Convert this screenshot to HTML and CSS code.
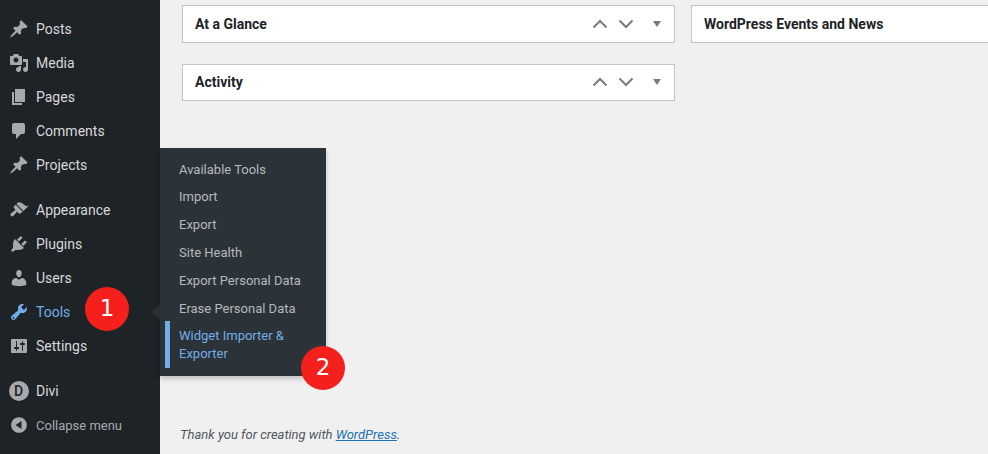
FILE: index.html
```
<!DOCTYPE html>
<html lang="en">
<head>
<meta charset="utf-8">
<title>Dashboard</title>
<link rel="stylesheet" href="styles.css">
</head>
<body>
<div class="app">
  <nav class="sidebar">
    <ul class="menu">
      <li class="item"><svg class="icon" viewBox="0 0 20 20"><path d="M10.44 3.02l1.82-1.82 6.36 6.35-1.83 1.82c-1.05-.68-2.48-.57-3.41.36l-.75.75c-.92.93-1.04 2.35-.35 3.41l-1.83 1.82-2.41-2.41-2.8 2.79c-.42.42-3.38 2.71-3.8 2.29s1.86-3.39 2.28-3.81l2.79-2.79L4.1 9.36l1.83-1.82c1.05.69 2.48.57 3.4-.36l.75-.75c.93-.92 1.05-2.35.36-3.41z"/></svg>Posts</li>
      <li class="item"><svg class="icon" viewBox="0 0 20 20"><path d="M13 11V4c0-.55-.45-1-1-1h-1.67L9 1H5L3.67 3H2c-.55 0-1 .45-1 1v7c0 .55.45 1 1 1h10c.55 0 1-.45 1-1zM7 4.5c1.38 0 2.5 1.12 2.5 2.5S8.38 9.5 7 9.5 4.5 8.38 4.5 7 5.62 4.5 7 4.5zM14 6h5v10.5c0 1.38-1.12 2.5-2.5 2.5S14 17.88 14 16.5s1.12-2.5 2.5-2.5c.17 0 .34.02.5.05V9h-3V6zm-4 8.05V13h2v3.5c0 1.38-1.12 2.5-2.5 2.5S7 17.88 7 16.5 8.12 14 9.5 14c.17 0 .34.02.5.05z"/></svg>Media</li>
      <li class="item"><svg class="icon" viewBox="0 0 20 20"><path d="M6 15V2h10v13H6zm-1 1h8v2H3V5h2v11z"/></svg>Pages</li>
      <li class="item"><svg class="icon" viewBox="0 0 20 20"><path d="M5 2h9c1.1 0 2 .9 2 2v7c0 1.1-.9 2-2 2h-2l-5 5v-5H5c-1.1 0-2-.9-2-2V4c0-1.1.9-2 2-2z"/></svg>Comments</li>
      <li class="item"><svg class="icon" viewBox="0 0 20 20"><path d="M10.44 3.02l1.82-1.82 6.36 6.35-1.83 1.82c-1.05-.68-2.48-.57-3.41.36l-.75.75c-.92.93-1.04 2.35-.35 3.41l-1.83 1.82-2.41-2.41-2.8 2.79c-.42.42-3.38 2.71-3.8 2.29s1.86-3.39 2.28-3.81l2.79-2.79L4.1 9.36l1.83-1.82c1.05.69 2.48.57 3.4-.36l.75-.75c.93-.92 1.05-2.35.36-3.41z"/></svg>Projects</li>
      <li class="item group-start"><svg class="icon" viewBox="0 0 20 20"><path d="M14.48 11.06L7.41 3.99l1.5-1.5c.5-.56 2.3-.47 3.51.32 1.21.8 1.43 1.28 2.91 2.1 1.18.64 2.45 1.26 4.45.85zm-.71.71L6.7 4.7 4.93 6.47c-.39.39-.39 1.02 0 1.41l1.06 1.06c.39.39.39 1.03 0 1.42-.6.6-1.43 1.15-2.21 1.75-.96.75-3.25 2.03-1.95 3.73 1.31 1.7 3.05-.28 3.81-1.23.6-.78 1.15-1.61 1.75-2.21.39-.39 1.02-.39 1.41 0l1.06 1.06c.39.39 1.03.39 1.42 0z"/></svg>Appearance</li>
      <li class="item"><svg class="icon" viewBox="0 0 20 20"><path d="M13.11 4.36L9.87 7.6 8 5.73l3.24-3.24c.35-.34 1.05-.2 1.56.32.52.51.66 1.21.31 1.55zm-8 1.77l.91-1.12 9.01 9.01-1.19.84c-.71.71-2.63 1.16-3.82 1.16H6.14L4.9 17.26c-.59.59-1.54.59-2.12 0-.59-.58-.59-1.53 0-2.12l1.24-1.24v-3.88c0-1.13.4-3.02 1.09-3.89zm7.26 3.97l3.24-3.24c.34-.35 1.04-.21 1.55.31.52.51.66 1.21.31 1.55l-3.24 3.25z"/></svg>Plugins</li>
      <li class="item"><svg class="icon" viewBox="0 0 20 20"><path d="M10 9.25c-2.27 0-2.73-3.44-2.73-3.44C7 4.02 7.82 2 9.97 2c2.16 0 2.98 2.02 2.71 3.81 0 0-.41 3.44-2.68 3.44zm0 2.57L12.72 10c2.39 0 4.52 2.33 4.52 4.53v2.49s-3.65 1.13-7.24 1.13c-3.65 0-7.24-1.13-7.24-1.13v-2.49c0-2.25 1.94-4.48 4.47-4.48z"/></svg>Users</li>
      <li class="item active"><svg class="icon" viewBox="0 0 20 20"><path d="M16.68 9.77c-1.34 1.34-3.3 1.67-4.95.99l-5.41 6.52c-.99.99-2.59.99-3.57 0-.99-.98-.99-2.58 0-3.57l6.52-5.42c-.68-1.65-.35-3.61.99-4.95 1.28-1.28 3.12-1.62 4.72-1.06l-2.89 2.89 2.82 2.82 2.86-2.87c.53 1.58.18 3.41-1.09 4.68zm-12.87 6.7c.35.34.9.34 1.25 0 .34-.35.34-.9 0-1.25-.35-.34-.9-.34-1.25 0-.34.35-.34.9 0 1.25z"/></svg>Tools</li>
      <li class="item"><svg class="icon" viewBox="0 0 20 20"><path d="M18 16V4c0-.55-.45-1-1-1H3c-.55 0-1 .45-1 1v12c0 .55.45 1 1 1h14c.55 0 1-.45 1-1zM8 11h1c.55 0 1 .45 1 1s-.45 1-1 1H8v1.5c0 .28-.22.5-.5.5s-.5-.22-.5-.5V13H6c-.55 0-1-.45-1-1s.45-1 1-1h1V5.5c0-.28.22-.5.5-.5s.5.22.5.5V11zm5-2h-1c-.55 0-1-.45-1-1s.45-1 1-1h1V5.5c0-.28.22-.5.5-.5s.5.22.5.5V7h1c.55 0 1 .45 1 1s-.45 1-1 1h-1v5.5c0 .28-.22.5-.5.5s-.5-.22-.5-.5V9z"/></svg>Settings</li>
      <li class="item group-start"><span class="divi-icon">D</span>Divi</li>
      <li class="item collapse"><svg class="icon" viewBox="0 0 20 20"><path fill-rule="evenodd" d="M10 2.16c4.33 0 7.84 3.51 7.84 7.84s-3.51 7.84-7.84 7.84S2.16 14.33 2.16 10 5.67 2.16 10 2.16zM12.5 14V6l-6 4z"/></svg>Collapse menu</li>
    </ul>
  </nav>
  <main class="content">
    <div class="columns">
      <div class="column">
        <section class="panel">
          <h2 class="panel-title">At a Glance</h2>
          <div class="panel-actions">
            <svg class="chev" viewBox="0 0 16 10"><path d="M1.5 8.5L8 2l6.5 6.5"/></svg>
            <svg class="chev" viewBox="0 0 16 10"><path d="M1.5 1.5L8 8l6.5-6.5"/></svg>
            <span class="caret"></span>
          </div>
        </section>
        <section class="panel">
          <h2 class="panel-title">Activity</h2>
          <div class="panel-actions">
            <svg class="chev" viewBox="0 0 16 10"><path d="M1.5 8.5L8 2l6.5 6.5"/></svg>
            <svg class="chev" viewBox="0 0 16 10"><path d="M1.5 1.5L8 8l6.5-6.5"/></svg>
            <span class="caret"></span>
          </div>
        </section>
      </div>
      <div class="column wide">
        <section class="panel">
          <h2 class="panel-title">WordPress Events and News</h2>
        </section>
      </div>
    </div>
    <p class="footer">Thank you for creating with <a href="#">WordPress</a>.</p>
  </main>
</div>
<span class="pointer"></span>
<ul class="submenu">
  <li>Available Tools</li>
  <li>Import</li>
  <li>Export</li>
  <li>Site Health</li>
  <li>Export Personal Data</li>
  <li>Erase Personal Data</li>
  <li class="current">Widget Importer &amp; Exporter</li>
</ul>
<span class="badge badge-one">1</span>
<span class="badge badge-two">2</span>
</body>
</html>
```
FILE: styles.css
```
* {
  box-sizing: border-box;
}

html,
body {
  margin: 0;
  height: 454px;
  overflow: hidden;
}

body {
  position: relative;
  background: #f0f0f1;
  font-family: Roboto, "Liberation Sans", sans-serif;
}

.app {
  display: flex;
  height: 454px;
}

.sidebar {
  flex: 0 0 160px;
  background: #1d2327;
}

.menu {
  list-style: none;
  margin: 0;
  padding: 12px 0 0;
}

.item {
  display: flex;
  align-items: center;
  gap: 7.5px;
  height: 34px;
  padding-left: 8.5px;
  color: #d8d8da;
  font-size: 14px;
}

.item.group-start {
  margin-top: 11px;
}

.item.active {
  color: #72aee6;
}

.item.collapse {
  color: #a7aaad;
  font-size: 13px;
}

.icon {
  flex: none;
  width: 20px;
  height: 20px;
  fill: #a7aaad;
}

.active .icon {
  fill: #72aee6;
}

.divi-icon {
  flex: none;
  display: flex;
  align-items: center;
  justify-content: center;
  width: 20px;
  height: 20px;
  border-radius: 50%;
  background: #a7aaad;
  color: #1d2327;
  font-size: 14px;
  font-weight: 500;
}

.content {
  flex: 1;
  min-width: 0;
  display: flex;
  flex-direction: column;
  padding: 5px 0 11px 20px;
  overflow: hidden;
}

.columns {
  display: flex;
  gap: 16px;
  margin-left: 2px;
}

.column {
  flex: 0 0 493px;
  display: flex;
  flex-direction: column;
  gap: 21px;
}

.column.wide {
  flex: 0 0 400px;
}

.panel {
  display: flex;
  align-items: center;
  justify-content: space-between;
  height: 38px;
  padding: 0 12px;
  background: #fff;
  border: 1px solid #c3c4c7;
}

.panel + .panel {
  height: 37px;
  padding-bottom: 2px;
}

.panel-title {
  margin: 0;
  color: #1d2327;
  font-size: 14px;
  font-weight: 700;
}

.panel-actions {
  display: flex;
  align-items: center;
  gap: 9.5px;
}

.chev {
  width: 16px;
  height: 10px;
  fill: none;
  stroke: #787c82;
  stroke-width: 2;
}

.caret {
  width: 0;
  height: 0;
  margin-left: 10px;
  margin-right: 1px;
  border-style: solid;
  border-width: 6px 4px 0;
  border-color: #787c82 transparent transparent;
}

.footer {
  margin: auto 0 0;
  color: #50575e;
  font-size: 13px;
  font-style: italic;
  line-height: 16px;
}

.footer a {
  color: #2271b1;
}

.pointer {
  position: absolute;
  left: 152px;
  top: 304px;
  width: 0;
  height: 0;
  border-style: solid;
  border-width: 8px 8px 8px 0;
  border-color: transparent #2c3338 transparent transparent;
}

.submenu {
  position: absolute;
  left: 160px;
  top: 148px;
  width: 165.5px;
  height: 227.5px;
  list-style: none;
  margin: 0;
  padding: 7.55px 0 0;
  background: #2c3338;
  box-shadow: 0 3px 5px rgba(0, 0, 0, 0.2);
  color: #b4b9be;
  font-size: 13px;
  line-height: 18px;
}

.submenu li {
  padding: 5px 14px 4.8px 19px;
}

.submenu .current {
  position: relative;
  color: #72aee6;
}

.submenu .current::before {
  content: "";
  position: absolute;
  left: 5px;
  top: -1.2px;
  height: 47px;
  width: 4.5px;
  background: #72aee6;
}

.badge {
  position: absolute;
  width: 44px;
  height: 44px;
  border-radius: 50%;
  background: #f5201b;
  color: #fff;
  font-family: "DejaVu Sans", sans-serif;
  font-size: 23px;
  line-height: 42px;
  text-align: center;
}

.badge-one {
  left: 85px;
  top: 287px;
}

.badge-two {
  left: 301px;
  top: 346px;
}
```
